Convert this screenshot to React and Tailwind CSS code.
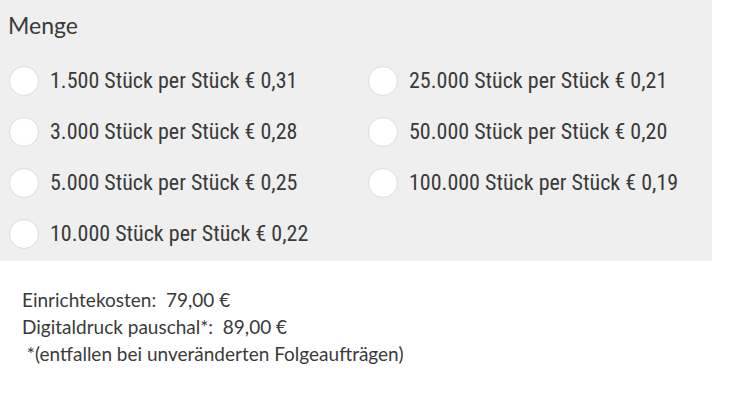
import React from "react";

const OPTIONS = [
  ["1.500", "0,31"],
  ["25.000", "0,21"],
  ["3.000", "0,28"],
  ["50.000", "0,20"],
  ["5.000", "0,25"],
  ["100.000", "0,19"],
  ["10.000", "0,22"],
];

function Radio({ qty, price }) {
  return (
    <label className="flex items-center gap-[11px] h-[51px] cursor-pointer">
      <span className="w-[30px] h-[30px] rounded-full bg-white border border-[#dcdcdc] shrink-0" />
      <span className="text-[22px] text-[#3a3a3a] font-['Roboto_Condensed',sans-serif]">
        {qty} Stück per Stück € {price}
      </span>
    </label>
  );
}

export default function App() {
  return (
    <div className="w-[730px] h-[419px] bg-white font-['Lato',sans-serif]">
      <div className="w-[712px] h-[261px] bg-[#efefef] pt-[9px] pl-[9px]">
        <div className="text-[23px] text-[#3a3a3a] leading-[32px] -ml-px">Menge</div>
        <div className="grid grid-cols-[359px_1fr] mt-[14px]">
          {OPTIONS.map(([q, p]) => (
            <Radio key={q} qty={q} price={p} />
          ))}
        </div>
      </div>
      <div className="pl-[22px] pt-[25px] text-[19px] text-[#3a3a3a] leading-[27px]">
        <div>Einrichtekosten:&nbsp; 79,00 €</div>
        <div>Digitaldruck pauschal*:&nbsp;&nbsp;89,00 €</div>
        <div>&nbsp;*(entfallen bei unveränderten Folgeaufträgen)</div>
      </div>
    </div>
  );
}
